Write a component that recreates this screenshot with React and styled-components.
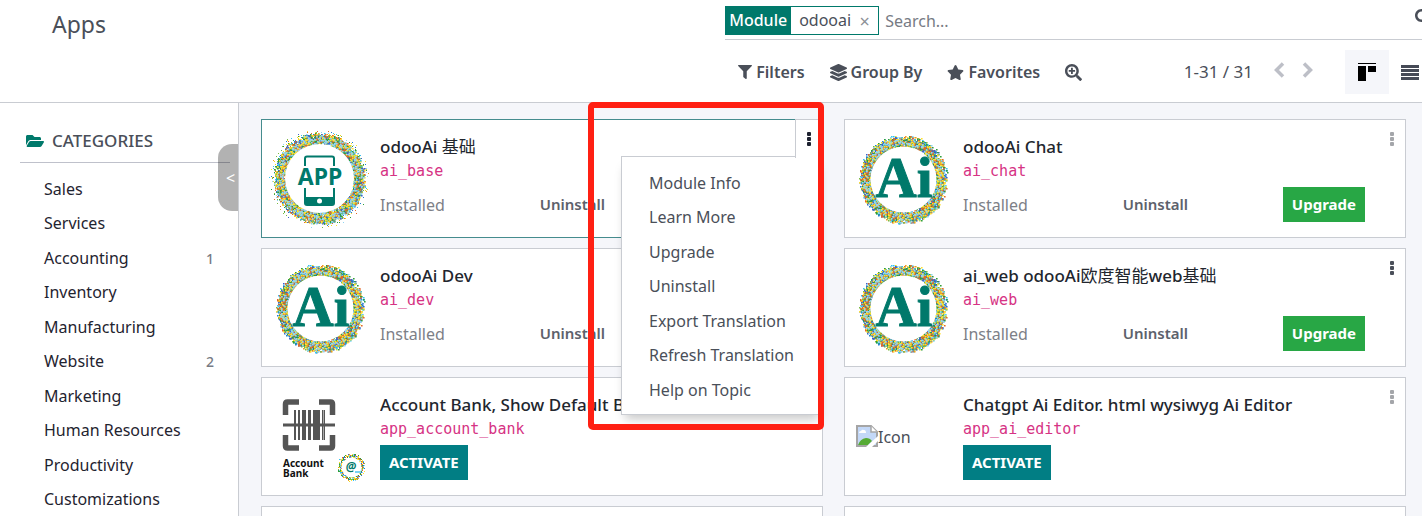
import React from "react";
import styled, { createGlobalStyle } from "styled-components";
import {
  FaFilter,
  FaFolderOpen,
  FaLayerGroup,
  FaSearch,
  FaSearchPlus,
  FaStar,
} from "react-icons/fa";

const TEAL = "#00796b";
const LINE = "#c9ccd2";
const INK = "#4a4f59";
const SANS = '"Noto Sans", "Noto Sans CJK SC", sans-serif';

const GlobalStyle = createGlobalStyle`
  *, *::before, *::after { box-sizing: border-box; }
  body {
    margin: 0;
    background: #fff;
    color: ${INK};
    font-family: ${SANS};
    font-size: 16px;
    line-height: 1.5;
  }
  button, input { font: inherit; color: inherit; }
  button { border: 0; background: none; padding: 0; cursor: pointer; }
  h1, h2, h3, ul { margin: 0; padding: 0; font: inherit; }
  ul { list-style: none; }
  svg { display: block; flex: none; }
`;

const Shell = styled.div`
  display: flex;
  flex-direction: column;
  height: 100vh;
  overflow: hidden;
`;

/* ---------- control panel ---------- */

const Header = styled.header`
  flex: none;
  display: grid;
  grid-template-columns: 51% 49%;
  border-bottom: 1px solid ${LINE};
`;

const PageTitle = styled.h1`
  padding: 7px 0 0 52px;
  font-size: 23px;
  line-height: 34px;
`;

const SearchRow = styled.div`
  display: flex;
  align-items: center;
  height: 40px;
  padding-top: 2px;
  border-bottom: 1px solid ${LINE};
  overflow: hidden;
`;

const Facet = styled.div`
  flex: none;
  display: flex;
  align-items: center;
  height: 29px;
  border: 1px solid ${TEAL};
  line-height: 27px;
`;

const FacetLabel = styled.span`
  padding: 0 4px 0 3px;
  background: ${TEAL};
  color: #fff;
  font-weight: 500;
`;

const FacetValue = styled.span`
  padding-left: 8px;
`;

const FacetRemove = styled.button`
  width: 27px;
  color: #8d9097;
  font-size: 18px;
  line-height: 24px;
`;

const SearchInput = styled.input`
  flex: 1;
  min-width: 0;
  padding: 0 6px;
  border: 0;
  outline: 0;
  background: none;
  &::placeholder { color: #777b84; opacity: 1; }
`;

const SearchButton = styled.button`
  flex: none;
  margin: -8px -9px 0 0;
  font-size: 16px;
`;

const ToolRow = styled.div`
  display: flex;
  align-items: center;
  justify-content: space-between;
  height: 62px;
  padding: 2px 0 0 13px;
`;

const ToolGroup = styled.div`
  display: flex;
  align-items: center;
  gap: ${(p) => p.$gap}px;
`;

const ToolButton = styled.button`
  display: flex;
  align-items: center;
  gap: 4px;
  font-weight: 600;
  svg { font-size: ${(p) => p.$icon || 17}px; }
`;

const PagerCount = styled.span`
  margin-right: 6px;
  font-size: 17px;
`;

const PagerButton = styled.button`
  width: 17px;
  display: grid;
  place-items: center;
  padding-bottom: 4px;
  color: #bdbfc7;
`;

const Views = styled.div`
  display: flex;
  margin-left: 16px;
`;

const ViewButton = styled.button`
  display: grid;
  place-items: center;
  width: ${(p) => (p.$active ? 44 : 42)}px;
  height: 44px;
  background: ${(p) => (p.$active ? "#f5f6fa" : "transparent")};
  margin-right: ${(p) => (p.$active ? 0 : -9)}px;
`;

/* ---------- sidebar ---------- */

const Body = styled.div`
  flex: 1;
  min-height: 0;
  display: flex;
`;

const Sidebar = styled.aside`
  position: relative;
  flex: none;
  width: 239px;
  padding: 22px 8px 0 20px;
  border-right: 1px solid ${LINE};
  background: #fff;
`;

const SidebarTitle = styled.h2`
  display: flex;
  align-items: center;
  gap: 8px;
  height: 38px;
  padding: 0 0 5px 6px;
  border-bottom: 1px solid #bfc1cb;
  font-size: 17px;
  font-weight: 500;
  svg { color: ${TEAL}; font-size: 18px; }
`;

const CategoryList = styled.ul`
  padding: 9px 16px 0 24px;
`;

const CategoryItem = styled.li`
  display: flex;
  justify-content: space-between;
  align-items: center;
  color: #1f2430;
  a { padding: 5px 0; font-size: 16px; line-height: 1.53; color: inherit; text-decoration: none; }
  span { color: #777b84; font-size: 14px; font-weight: 500; }
`;

const Collapse = styled.button`
  position: absolute;
  top: 41px;
  right: 0;
  width: 20px;
  height: 67px;
  padding-left: 5px;
  border-radius: 14px 0 0 14px;
  background: rgba(0, 0, 0, 0.3);
  color: #fff;
  font-size: 16px;
`;

/* ---------- module cards ---------- */

const Board = styled.main`
  flex: 1;
  min-width: 0;
  display: grid;
  grid-template-columns: 1fr 1fr;
  align-content: start;
  gap: 10px 21px;
  padding: 16px 16px 0 22px;
  background: #f5f6fa;
`;

const CardBox = styled.article`
  position: relative;
  z-index: ${(p) => (p.$open ? 1 : 0)};
  display: flex;
  height: 119px;
  min-width: 0;
  border: 1px solid ${(p) => (p.$open ? "#458c8e" : LINE)};
  background: #fff;
`;

const Picture = styled.div`
  flex: none;
  display: flex;
  align-items: center;
  width: 118px;
  padding-left: 9px;
`;

const MissingPicture = styled.div`
  display: flex;
  padding-left: 2px;
  line-height: 24px;
`;

const Details = styled.div`
  flex: 1;
  min-width: 0;
  padding: 14px 40px 0 0;
`;

const ModuleName = styled.h3`
  color: #22262e;
  font-size: 17px;
  font-weight: 500;
  line-height: 26px;
  white-space: nowrap;
  overflow: hidden;
  span { font-weight: 400; }
`;

const TechName = styled.code`
  display: block;
  color: #d63384;
  font-family: "DejaVu Sans Mono", monospace;
  font-size: 15px;
  line-height: 22px;
`;

const Actions = styled.div`
  display: flex;
  align-items: center;
  justify-content: space-between;
  margin-top: 5px;
`;

const Status = styled.span`
  color: #7d8087;
`;

const variants = {
  plain: ["transparent", "#5d616b", 600],
  upgrade: ["#28a745", "#fff", 700],
  activate: ["#017e84", "#fff", 700],
};

const ActionButton = styled.button`
  height: 35px;
  padding: 0 9px;
  background: ${(p) => variants[p.$kind][0]};
  color: ${(p) => variants[p.$kind][1]};
  font-size: 15px;
  font-weight: ${(p) => variants[p.$kind][2]};
`;

const MenuToggle = styled.button`
  position: absolute;
  z-index: 2;
  top: -1px;
  right: -1px;
  display: grid;
  place-items: center;
  width: 28px;
  height: ${(p) => (p.$open ? 39 : 38)}px;
  border: solid ${(p) => (p.$open ? LINE : "transparent")};
  border-width: 1px 1px 0 1px;
  background: ${(p) => (p.$open ? "#fff" : "none")};
  color: ${(p) => p.$tone};
`;

const Menu = styled.ul`
  position: absolute;
  z-index: 1;
  top: 36px;
  right: -1px;
  width: 202px;
  padding: 9px 0 7px 27px;
  border: 1px solid ${LINE};
  background: #fff;
  box-shadow: 0 8px 10px -4px rgba(0, 0, 0, 0.22);
`;

const MenuItem = styled.button`
  display: block;
  padding: 5px 0;
  font-size: 16px;
  line-height: 1.53;
  white-space: nowrap;
`;

const Highlight = styled.div`
  position: absolute;
  z-index: 3;
  top: -18px;
  right: -2px;
  width: 236px;
  height: 328px;
  border: 6px solid #ff2013;
  border-radius: 5px;
  pointer-events: none;
`;

/* ---------- drawings ---------- */

const CONFETTI = [
  "#2f9e3c", "#1f7fd0", "#f5dc1c", "#f0a01d", "#35c3f3", "#7cba42", "#3f62c8", "#2f9e3c", "#e2682a", "#ffe030", "#8fd4f2",
];

// Scatters coloured specks in a ring, denser toward its middle radius.
function scatter(count, inner, outer, center, size, seed) {
  let s = seed;
  const next = () => {
    s = (s + 0x6d2b79f5) | 0;
    let t = Math.imul(s ^ (s >>> 15), 1 | s);
    t = (t + Math.imul(t ^ (t >>> 7), 61 | t)) ^ t;
    return ((t ^ (t >>> 14)) >>> 0) / 4294967296;
  };
  const paths = CONFETTI.map(() => "");
  for (let i = 0; i < count; i += 1) {
    const a = next() * Math.PI * 2;
    const t = (next() + next()) / 2;
    const r = inner + t * (outer - inner);
    const x = Math.round(center + r * Math.cos(a));
    const y = Math.round(center + r * Math.sin(a));
    const k = Math.floor(next() * CONFETTI.length);
    paths[k] += `M${x} ${y}h${size}v${size}h-${size}z`;
  }
  return paths;
}

const AI_RING = scatter(4200, 30, 45, 49, 1.6, 7);
const APP_RING = [scatter(4200, 32, 46, 48, 1.6, 11), scatter(600, 36, 51, 48, 1, 29)];

const Specks = ({ paths }) => paths.map((d, i) => <path key={i} d={d} fill={CONFETTI[i]} />);

const AiLogo = () => (
  <svg width="98" height="98" viewBox="0 0 98 98" role="img" aria-label="Ai">
    <Specks paths={AI_RING} />
    <circle cx="49.500" cy="49.500" r="33" fill="#fff" />
    <text
      x="50"
      y="67"
      textAnchor="middle"
      fill={TEAL}
      stroke={TEAL}
      strokeWidth="1"
      fontFamily='"Liberation Serif", serif'
      fontWeight="700"
      fontSize="57"
    >
      Ai
    </text>
  </svg>
);

const AppLogo = () => (
  <svg width="98" height="98" viewBox="0 0 98 98" overflow="visible" role="img" aria-label="APP">
    <Specks paths={APP_RING[1]} />
    <Specks paths={APP_RING[0]} />
    <circle cx="48.500" cy="48.500" r="34.500" fill="#fff" />
    <path d="M34 36V28.500q0-2 2-2h25q2 0 2 2v7.500" fill="none" stroke={TEAL} strokeWidth="2" />
    <path d="M33 58h2v9h27v-9h2v15q0 3-3 3H36q-3 0-3-3z" fill={TEAL} />
    <circle cx="48.500" cy="71" r="2.500" fill="#fff" />
    <text x="49" y="55" textAnchor="middle" fill={TEAL} fontFamily={SANS} fontWeight="700" fontSize="23">
      APP
    </text>
  </svg>
);

const BADGE_RING = scatter(480, 9, 14, 13, 1, 3);

const BankLogo = () => (
  <svg width="98" height="98" viewBox="0 0 98 98" role="img" aria-label="Account Bank">
    <path
      d="M28 14H16.500q-2 0-2 2v11M48 14h11.500q2 0 2 2v11M28 60H16.500q-2 0-2-2v-11M48 60h11.500q2 0 2-2v-11"
      fill="none"
      stroke="#555"
      strokeWidth="5.500"
    />
    <path
      d="M12 35.500h52v3H12zM23 22h2v30h-2zM27 22h2v30H27zM31 22h4v30h-4zM37 22h3v30H37zM42 22h7v30h-7zM51 22h1.500v30h-1.500zM53 22h1v30h-1z"
      fill="#555"
    />
    <g fill="#111" fontFamily={SANS} fontWeight="700" fontSize="10">
      <text x="12" y="79">Account</text>
      <text x="12" y="89">Bank</text>
    </g>
    <g transform="translate(67 66)">
      <Specks paths={BADGE_RING} />
      <circle cx="13.500" cy="13.500" r="10" fill="#fff" />
      <text x="13" y="17" textAnchor="middle" fill={TEAL} fontFamily={SANS} fontWeight="700" fontStyle="italic" fontSize="12">
        @
      </text>
      <path d="M17 18h6" stroke="#4cc3ee" strokeWidth="1.500" />
    </g>
  </svg>
);

const BrokenImage = () => (
  <svg width="22" height="22" viewBox="0 0 22 22" aria-hidden="true">
    <path d="M1 1h14l6 6v14H1z" fill="#c3d8f8" stroke="#a5a5a5" strokeWidth="2" />
    <path d="M15 1v6h6" fill="#fff" stroke="#a5a5a5" strokeWidth="1.500" />
    <path d="M3 8q0-2 2-2 1-2 3-1 2 0 2 3z" fill="#fff" />
    <path d="M2 20q2-6 8-7 4 0 6 3l-4 4z" fill="#56ab35" />
    <path d="M10 22 22 11v5l-6 6z" fill="#fff" />
  </svg>
);

const Chevron = ({ d }) => (
  <svg width="12" height="16" viewBox="0 0 12 16" fill="none" stroke="currentColor" strokeWidth="3.500" aria-hidden="true">
    <path d={d} />
  </svg>
);

const Dots = () => (
  <svg width="4" height="14" viewBox="0 0 4 14" fill="currentColor" aria-hidden="true">
    <rect width="4" height="4" rx="1" />
    <rect y="5" width="4" height="4" rx="1" />
    <rect y="10" width="4" height="4" rx="1" />
  </svg>
);

const KanbanIcon = () => (
  <svg width="18" height="18" viewBox="0 0 18 18" fill="#000" aria-hidden="true">
    <path d="M0 0h18v1H0zM0 3h8v15H0zM10 3h8v6h-8z" />
  </svg>
);

const ListIcon = () => (
  <svg width="18" height="15" viewBox="0 0 18 15" fill="#454a56" aria-hidden="true">
    <path d="M0 0h18v3H0zM0 4h18v3H0zM0 8h18v3H0zM0 12h18v3H0z" />
  </svg>
);

/* ---------- data ---------- */

const categories = [
  ["Sales"],
  ["Services"],
  ["Accounting", 1],
  ["Inventory"],
  ["Manufacturing"],
  ["Website", 2],
  ["Marketing"],
  ["Human Resources"],
  ["Productivity"],
  ["Customizations"],
];

const menuItems = [
  "Module Info",
  "Learn More",
  "Upgrade",
  "Uninstall",
  "Export Translation",
  "Refresh Translation",
  "Help on Topic",
];

const modules = [
  { name: <>odooAi <span>基础</span></>, tech: "ai_base", logo: <AppLogo />, installed: true, open: true, tone: "#1d2130" },
  { name: "odooAi Chat", tech: "ai_chat", logo: <AiLogo />, installed: true, tone: "#a4a6aa" },
  { name: "odooAi Dev", tech: "ai_dev", logo: <AiLogo />, installed: true, tone: "#a4a6aa" },
  {
    name: <>ai_web odooAi<span>欧度智能</span>web<span>基础</span></>,
    tech: "ai_web",
    logo: <AiLogo />,
    installed: true,
    tone: "#4a4f59",
  },
  { name: "Account Bank, Show Default Bank", tech: "app_account_bank", logo: <BankLogo />, tone: "#a4a6aa" },
  { name: "Chatgpt Ai Editor. html wysiwyg Ai Editor", tech: "app_ai_editor", tone: "#a4a6aa" },
];

function ModuleCard({ module }) {
  const { name, tech, logo, installed, open, tone } = module;
  return (
    <CardBox $open={open}>
      <Picture>
        {logo || (
          <MissingPicture>
            <BrokenImage />
            Icon
          </MissingPicture>
        )}
      </Picture>
      <Details>
        <ModuleName>{name}</ModuleName>
        <TechName>{tech}</TechName>
        <Actions>
          {installed ? (
            <>
              <Status>Installed</Status>
              <ActionButton $kind="plain">Uninstall</ActionButton>
              <ActionButton $kind="upgrade">Upgrade</ActionButton>
            </>
          ) : (
            <ActionButton $kind="activate">ACTIVATE</ActionButton>
          )}
        </Actions>
      </Details>
      <MenuToggle $open={open} $tone={tone} aria-label={`Menu for ${tech}`} aria-expanded={!!open}>
        <Dots />
      </MenuToggle>
      {open && (
        <>
          <Menu>
            {menuItems.map((item) => (
              <li key={item}>
                <MenuItem>{item}</MenuItem>
              </li>
            ))}
          </Menu>
          <Highlight />
        </>
      )}
    </CardBox>
  );
}

export default function App() {
  return (
    <Shell>
      <GlobalStyle />
      <Header>
        <PageTitle>Apps</PageTitle>
        <div>
          <SearchRow role="search">
            <Facet>
              <FacetLabel>Module</FacetLabel>
              <FacetValue>odooai</FacetValue>
              <FacetRemove aria-label="Remove">×</FacetRemove>
            </Facet>
            <SearchInput type="text" placeholder="Search..." aria-label="Search" />
            <SearchButton aria-label="Search">
              <FaSearch />
            </SearchButton>
          </SearchRow>
          <ToolRow>
            <ToolGroup $gap={25}>
              <ToolButton $icon={14}><FaFilter />Filters</ToolButton>
              <ToolButton><FaLayerGroup />Group By</ToolButton>
              <ToolButton><FaStar />Favorites</ToolButton>
              <ToolButton aria-label="Zoom"><FaSearchPlus /></ToolButton>
            </ToolGroup>
            <ToolGroup $gap={12}>
              <PagerCount>1-31 / 31</PagerCount>
              <PagerButton aria-label="Previous"><Chevron d="M10 1.500 3.500 8l6.500 6.500" /></PagerButton>
              <PagerButton aria-label="Next"><Chevron d="M2 1.500 8.500 8 2 14.500" /></PagerButton>
              <Views>
                <ViewButton $active aria-label="Kanban"><KanbanIcon /></ViewButton>
                <ViewButton aria-label="List"><ListIcon /></ViewButton>
              </Views>
            </ToolGroup>
          </ToolRow>
        </div>
      </Header>
      <Body>
        <Sidebar>
          <SidebarTitle><FaFolderOpen />CATEGORIES</SidebarTitle>
          <CategoryList>
            {categories.map(([label, count]) => (
              <CategoryItem key={label}>
                <a href="#category">{label}</a>
                {count && <span>{count}</span>}
              </CategoryItem>
            ))}
          </CategoryList>
          <Collapse aria-label="Collapse sidebar">&lt;</Collapse>
        </Sidebar>
        <Board>
          {modules.map((m) => (
            <ModuleCard key={m.tech} module={m} />
          ))}
          <CardBox />
          <CardBox />
        </Board>
      </Body>
    </Shell>
  );
}
